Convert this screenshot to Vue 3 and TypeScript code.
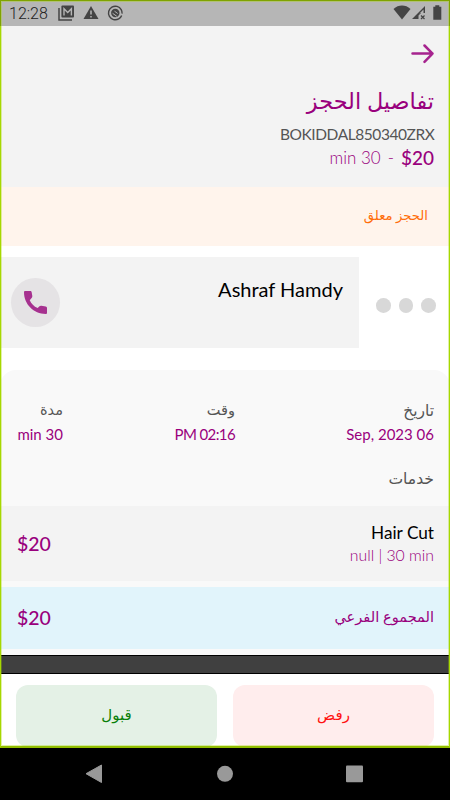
<script setup lang="ts">
interface Fact { label: string; value: string; kind: string }

const facts: Fact[] = [
  { label: 'تاريخ', value: 'Sep, 2023 06', kind: 'date' },
  { label: 'وقت', value: 'PM 02:16', kind: 'time' },
  { label: 'مدة', value: 'min 30', kind: 'duration' },
]
</script>

<template>
  <div class="screen">
    <div class="status">
      <span class="clock">12:28</span>
      <svg class="notif" width="66" height="18" viewBox="0 0 66 18">
        <path d="M1 4v12h13" fill="none" stroke="#444" stroke-width="1.5" />
        <rect x="3.4" y="1.5" width="12.6" height="12" rx="1" fill="#444" />
        <path d="M6 11.500V4.800l3.700 3.700 3.700-3.700v6.700" fill="none" stroke="#b6b6b6" stroke-width="1.400" />
        <path d="M33 2 40.500 15H25.500z" fill="#444" />
        <path d="M33 6.600v4M33 12v1.600" stroke="#b6b6b6" stroke-width="1.500" />
        <circle cx="57.300" cy="9" r="6.800" fill="none" stroke="#444" stroke-width="1.400" stroke-dasharray="36 1.800" transform="rotate(60 57.300 9)" />
        <circle cx="57.300" cy="9" r="4.200" fill="#444" />
        <path d="m54.600 9.300 4.200 3M56.500 7.200l3.200 2.300" stroke="#b6b6b6" stroke-width="1" />
      </svg>
      <svg class="signals" width="50" height="18" viewBox="0 0 50 18">
        <path d="M1.500 5C6.500.4 13.500.4 18.500 5L10 15.500z" fill="#444" />
        <path d="M20 15 33 2v7h-2.500v-1.500l-4 4V15z" fill="#444" />
        <path d="M27.500 9.500 31.500 5.500v3.500h-4z" fill="#b6b6b6" />
        <path d="m29 11.500 3.500 3.500m0-3.500L29 15" stroke="#444" stroke-width="1.200" />
        <path d="M43.300 2.700V1.300h4v1.400h2v13h-8v-13z" fill="#444" />
      </svg>
    </div>

    <header class="header">
      <svg class="arrow" width="24" height="20" viewBox="0 0 24 20">
        <path d="M2.500 9.600h20M14.500 1.500l8 8.100-8 8.200" fill="none" stroke="#a6238e" stroke-width="2.500" stroke-linecap="round" stroke-linejoin="round" />
      </svg>
      <h1 class="title" dir="rtl">تفاصيل الحجز</h1>
      <div class="code">BOKIDDAL850340ZRX</div>
      <div class="price"><span class="mins">min 30</span><span class="dash">-</span><b>$20</b></div>
    </header>

    <div class="pending" dir="rtl"><span>الحجز معلق</span></div>

    <section class="customer">
      <div class="person">
        <button class="call" aria-label="Call">
          <svg width="23" height="23" viewBox="3 3 18 18">
            <path fill="#a6318f" d="M7.500 10.200c1.200 2.600 3.200 4.900 6.200 6.100l1.400-1.400c.4-.4 1-.5 1.500-.4l3.400.6c.6.100 1 .6 1 1.200V20c0 .6-.4 1-1 1C10.600 21 3 13.400 3 4c0-.6.400-1 1-1h3.900c.6 0 1 .4 1.100.9l.5 3c.1.500-.1 1-.4 1.400z" />
          </svg>
        </button>
        <span class="name">Ashraf Hamdy</span>
      </div>
      <div class="dots"><i /><i /><i /></div>
    </section>

    <section class="details">
      <div class="facts" dir="rtl">
        <div v-for="f in facts" :key="f.kind" class="fact" :class="f.kind">
          <span class="label">{{ f.label }}</span>
          <span class="value" dir="ltr">{{ f.value }}</span>
        </div>
      </div>
      <div class="heading" dir="rtl"><span>خدمات</span></div>
      <div class="service">
        <b class="amount">$20</b>
        <div class="info">
          <span class="service-name">Hair Cut</span>
          <span class="service-meta">null | 30 min</span>
        </div>
      </div>
      <div class="subtotal">
        <b class="amount">$20</b>
        <span class="subtotal-label" dir="rtl">المجموع الفرعي</span>
      </div>
    </section>

    <div class="divider" />

    <footer class="actions">
      <button class="accept"><span>قبول</span></button>
      <button class="reject"><span>رفض</span></button>
    </footer>

    <nav class="nav">
      <svg width="450" height="52" viewBox="0 0 450 52">
        <path d="M86 25.700 101.500 17v17.500z" fill="#999" stroke="#999" stroke-linejoin="round" />
        <circle cx="225" cy="25.800" r="8" fill="#999" />
        <rect x="346" y="17.400" width="17" height="16.800" rx="1" fill="#999" />
      </svg>
    </nav>
    <div class="frame"><div class="frame-top" /></div>
  </div>
</template>

<style>
body { margin: 0; overflow: hidden; }
</style>

<style scoped>
* { box-sizing: border-box; }
.screen {
  position: relative; width: 450px; height: 800px; display: flex; flex-direction: column;
  background: #fff; overflow: hidden; color: #99007d;
  font-family: Lato, "DejaVu Sans", sans-serif;
}
button { border: 0; padding: 0; font: inherit; }
.status { height: 26px; flex: none; background: #b6b6b6; display: flex; align-items: center; padding: 0 8px 0 9px; }
.clock { font: 300 16px/26px Roboto, sans-serif; color: #222; width: 49px; padding-top: 2px; white-space: nowrap; }
.signals { margin-left: auto; }
.header { height: 161px; flex: none; background: #f3f3f3; padding: 18px 16px 0; display: flex; flex-direction: column; align-items: flex-end; }
.arrow { flex: none; }
.title { margin: 20px 0 0; font-size: 22.400px; line-height: 34px; font-weight: 400; white-space: nowrap; }
.code { font-size: 15.500px; line-height: 20px; margin-top: 6px; color: #555; letter-spacing: -.43px; margin-right: -.43px; }
.price { line-height: 24px; margin-top: 2px; font-size: 17px; display: flex; white-space: nowrap; }
.mins { font-weight: 300; }
.dash { margin: 0 7px; font-weight: 300; }
.price b { font-size: 19px; font-weight: 500; }
.pending { height: 59px; flex: none; background: #fff4ec; color: #ff6d0a; padding-right: 22px; font-size: 13.200px; line-height: 57px; }
.pending span { display: inline-block; }
.customer { margin-top: 11px; height: 91px; flex: none; display: flex; }
.person { width: 359px; background: #f3f3f3; display: flex; justify-content: space-between; padding: 18px 16px 0 11px; }
.call { width: 49px; height: 49px; border-radius: 50%; background: #e5e3e5; display: flex; align-items: center; justify-content: center; margin-top: 3px; }
.name { color: #000; font-size: 20px; line-height: 28px; }
.dots { display: flex; gap: 8px; padding: 41px 0 0 17px; }
.dots i { width: 14.700px; height: 14.700px; border-radius: 50%; background: #d8d8d8; }
.details { margin-top: 22px; height: 285px; flex: none; background: #f9f9f9; border-radius: 16px 16px 0 0; display: flex; flex-direction: column; }
.facts { height: 92px; padding: 29px 16px 0 17px; display: grid; grid-template-columns: 199px 172px 1fr; }
.fact { display: flex; flex-direction: column; align-items: flex-start; white-space: nowrap; }
.label { color: #555; font-size: 14.500px; line-height: 22px; }
.date .label { font-size: 15.500px; }
.value { font-size: 15px; line-height: 24px; margin-top: 1px; }
.time .value { letter-spacing: -.6px; }
.heading { color: #555; font-size: 15.600px; line-height: 32px; height: 44px; padding-right: 16px; }
.service { height: 75px; background: #f3f3f3; display: flex; justify-content: space-between; align-items: center; padding: 0 16px 0 17px; }
.amount { font-size: 19.500px; font-weight: 500; line-height: 24px; }
.info { display: flex; flex-direction: column; align-items: flex-end; }
.service-name { color: #000; font-size: 17.200px; line-height: 22px; }
.service-meta { font-size: 15.800px; font-weight: 300; line-height: 22px; }
.subtotal { margin-top: 6px; height: 62px; background: #e1f4fb; display: flex; justify-content: space-between; align-items: center; padding: 0 16px 0 17px; }
.subtotal-label { font-size: 14.600px; margin-bottom: 3px; }
.divider { height: 19px; flex: none; background: #404040; border: solid #000; border-width: 1px 0; }
.actions { height: 74px; flex: none; padding: 11px 16px 1px; display: grid; grid-template-columns: 1fr 1fr; gap: 16px; }
.actions button { border-radius: 12px; font-size: 15px; padding-bottom: 4px; }
.accept { background: #e4f1e6; color: #087f08; }
.reject { background: #ffeded; color: #f11; }
.nav { height: 52px; flex: none; background: #000; }
.nav svg { display: block; }
.frame { position: absolute; left: 0; top: 0; width: 450px; height: 748px; border: 1px solid #a6d800; border-bottom: 2px solid #91bd00; box-shadow: inset 0 0 0 1px rgba(166, 216, 0, .35); pointer-events: none; }
.frame-top { position: absolute; left: -1px; right: -1px; top: -1px; height: 26px; border: 1px solid #7fa200; border-bottom: 0; }
</style>
